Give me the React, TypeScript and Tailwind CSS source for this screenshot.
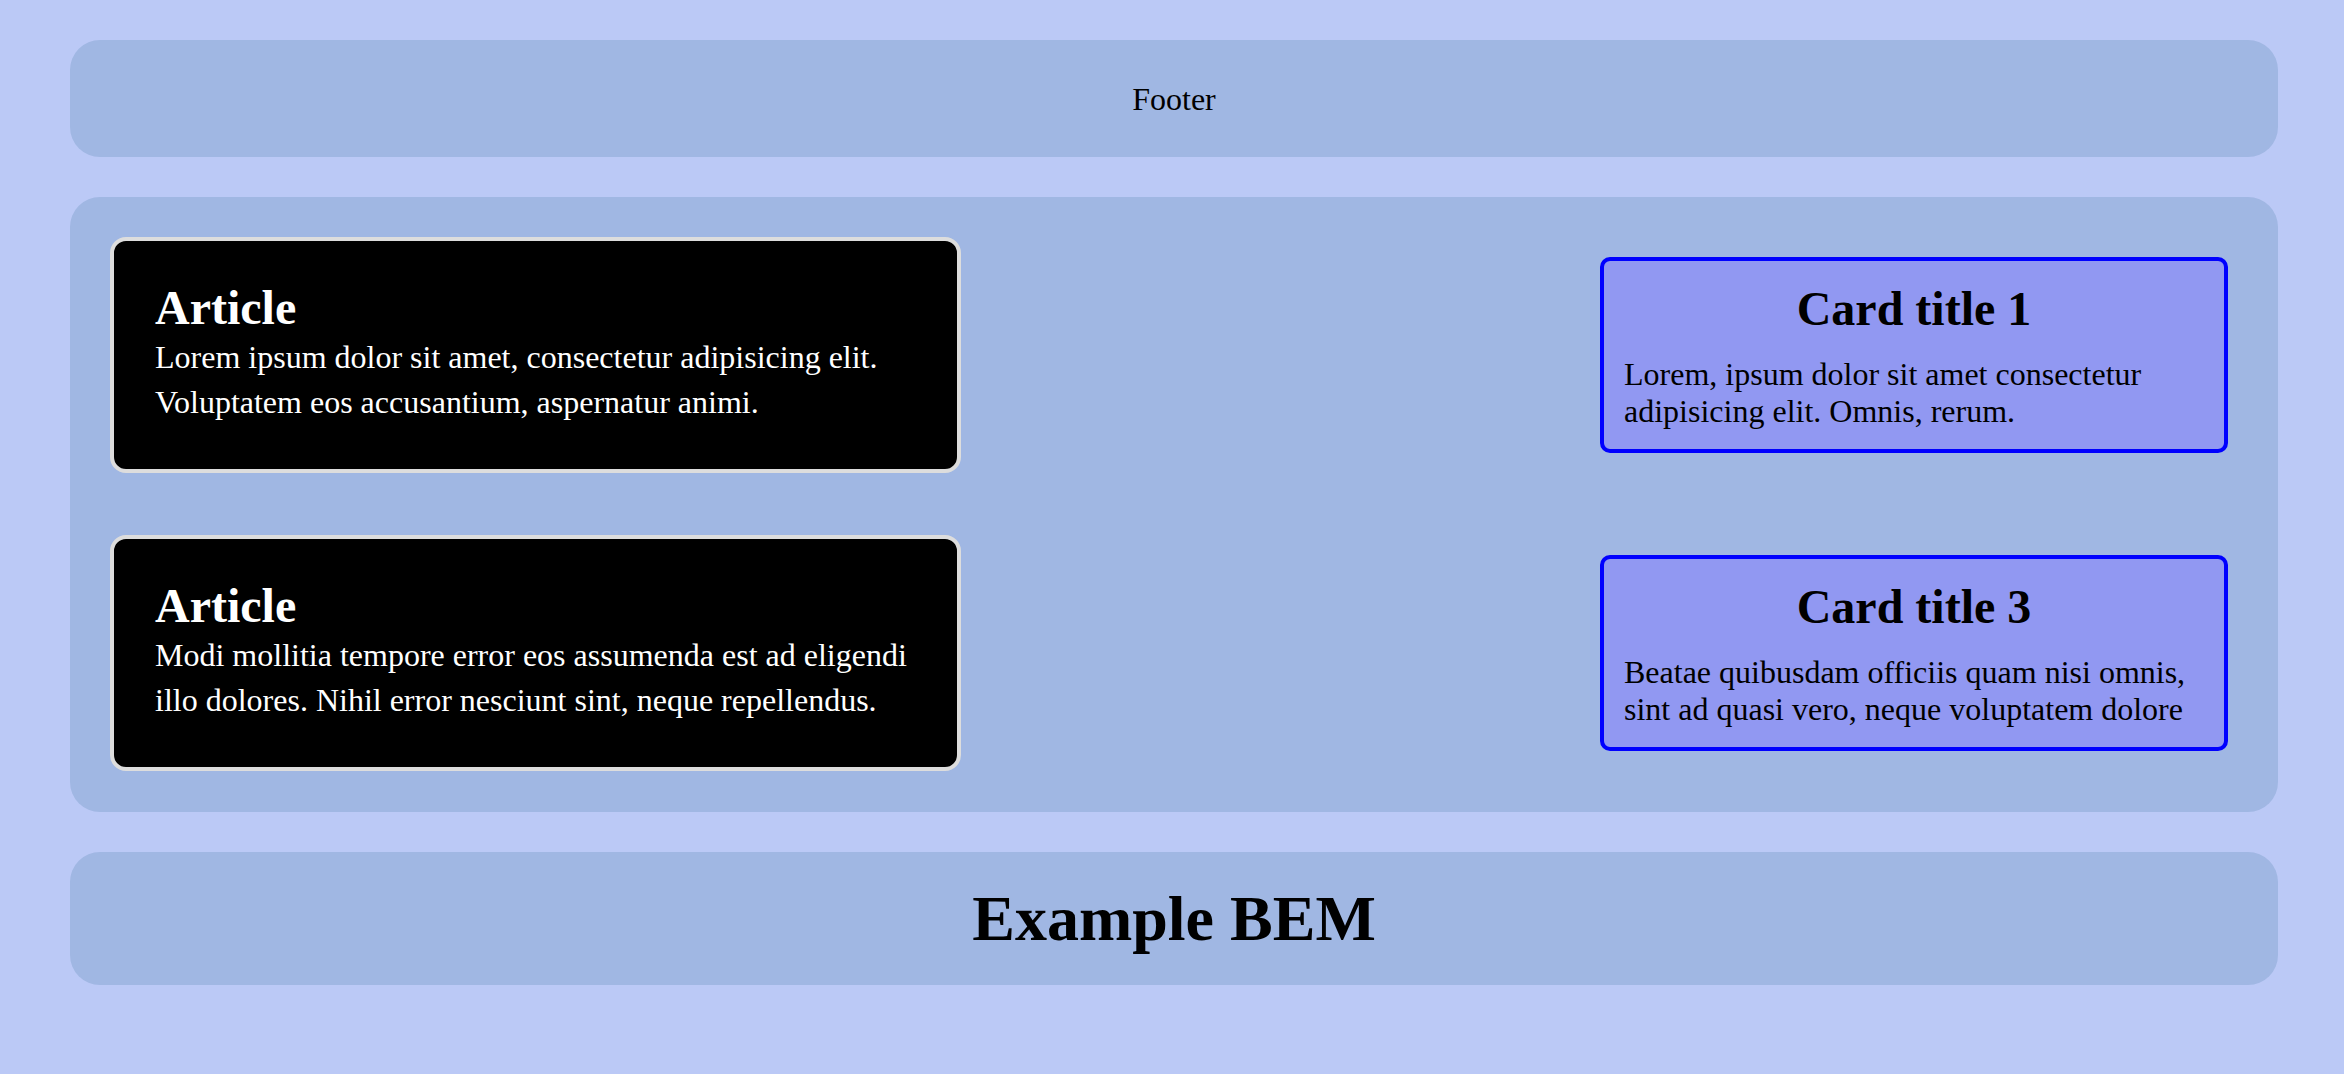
import React from 'react';

interface ArticleProps {
    text: string;
}

interface CardProps {
    title: string;
    text: string;
}

const Article: React.FC<ArticleProps> = ({ text }) => (
    <article className="box-border h-[236px] w-[851px] rounded-[16px] border-4 border-[#dddddd] bg-black pl-[41px] pr-[40px] pt-[39px] text-white">
        <h2 className="text-[48px] font-bold leading-[55px]">Article</h2>
        <p className="text-[32px] leading-[44.8px]">{text}</p>
    </article>
);

const Card: React.FC<CardProps> = ({ title, text }) => (
    <div className="box-border w-[628px] self-center justify-self-end rounded-[10px] border-4 border-[#0000ff] bg-[#9198f2] px-[20px] pb-[20px] pt-[20px] text-black">
        <h2 className="mb-[20px] text-center text-[48px] font-bold leading-[55px]">{title}</h2>
        <p className="text-[32px] leading-[36.8px]">{text}</p>
    </div>
);

export default function App() {
    return (
        <div className="min-h-screen bg-[#bbc9f6] pl-[70px] pr-[66px] pt-[40px] font-['Liberation_Serif',_'Times_New_Roman',_serif] text-black">
            <div className="flex flex-col gap-[40px]">
                <header className="flex h-[117px] items-center justify-center rounded-[30px] bg-[#a0b7e3]">
                    <span className="text-[32px]">Footer</span>
                </header>

                <main className="grid grid-cols-[851px_628px] justify-between gap-y-[62px] rounded-[30px] bg-[#a0b7e3] pb-[41px] pl-[40px] pr-[50px] pt-[40px]">
                    <Article text="Lorem ipsum dolor sit amet, consectetur adipisicing elit. Voluptatem eos accusantium, aspernatur animi." />
                    <Card title="Card title 1" text="Lorem, ipsum dolor sit amet consectetur adipisicing elit. Omnis, rerum." />
                    <Article text="Modi mollitia tempore error eos assumenda est ad eligendi illo dolores. Nihil error nesciunt sint, neque repellendus." />
                    <Card title="Card title 3" text="Beatae quibusdam officiis quam nisi omnis, sint ad quasi vero, neque voluptatem dolore" />
                </main>

                <footer className="flex h-[133px] items-center justify-center rounded-[30px] bg-[#a0b7e3]">
                    <h1 className="text-[64px] font-bold leading-[74px]">Example BEM</h1>
                </footer>
            </div>
        </div>
    );
}
